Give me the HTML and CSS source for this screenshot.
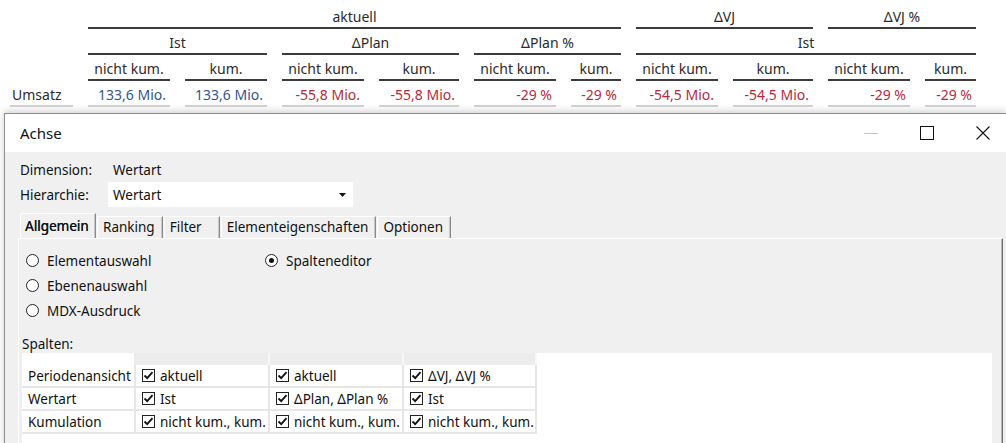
FILE: index.html
```html
<!DOCTYPE html>
<html lang="de">
<head>
<meta charset="utf-8">
<title>Achse</title>
<link rel="stylesheet" href="styles.css">
</head>
<body>
<div class="pivot">
  <div class="corner"></div>
  <div class="h span6">aktuell</div>
  <div class="h span2">ΔVJ</div>
  <div class="h span2">ΔVJ %</div>

  <div class="corner"></div>
  <div class="h span2">Ist</div>
  <div class="h span2">ΔPlan</div>
  <div class="h span2">ΔPlan %</div>
  <div class="h span4">Ist</div>

  <div class="corner"></div>
  <div class="h">nicht kum.</div><div class="h">kum.</div>
  <div class="h">nicht kum.</div><div class="h">kum.</div>
  <div class="h">nicht kum.</div><div class="h">kum.</div>
  <div class="h">nicht kum.</div><div class="h">kum.</div>
  <div class="h">nicht kum.</div><div class="h">kum.</div>

  <div class="rowlabel">Umsatz</div>
  <div class="v pos">133,6 Mio.</div>
  <div class="v pos">133,6 Mio.</div>
  <div class="v neg">-55,8 Mio.</div>
  <div class="v neg">-55,8 Mio.</div>
  <div class="v neg">-29 %</div>
  <div class="v neg">-29 %</div>
  <div class="v neg">-54,5 Mio.</div>
  <div class="v neg">-54,5 Mio.</div>
  <div class="v neg">-29 %</div>
  <div class="v neg">-29 %</div>
</div>

<div class="dialog">
  <div class="titlebar">
    <span class="title">Achse</span>
    <div class="winbtns">
      <span class="winbtn"><svg width="14" height="14" viewBox="0 0 14 14"><line x1="0" y1="7.5" x2="14" y2="7.5" stroke="#c4c4c4" stroke-width="1"/></svg></span>
      <span class="winbtn"><svg width="14" height="14" viewBox="0 0 14 14"><rect x="0.5" y="0.5" width="13" height="13" fill="none" stroke="#111" stroke-width="1"/></svg></span>
      <span class="winbtn"><svg width="14" height="14" viewBox="0 0 14 14"><path d="M0.5 0.5 L13.5 13.5 M13.5 0.5 L0.5 13.5" stroke="#111" stroke-width="1.1" fill="none"/></svg></span>
    </div>
  </div>

  <div class="body">
    <div class="fields">
      <span class="flabel">Dimension:</span>
      <span class="fvalue">Wertart</span>
      <span class="flabel">Hierarchie:</span>
      <div class="combo">
        <span>Wertart</span>
        <svg class="arrow" width="7" height="4" viewBox="0 0 7 4"><path d="M0 0 H7 L3.5 4 Z" fill="#111"/></svg>
      </div>
    </div>

    <div class="tabs">
      <span class="tab active">Allgemein</span>
      <span class="tab">Ranking</span>
      <span class="tab wide">Filter</span>
      <span class="tab">Elementeigenschaften</span>
      <span class="tab">Optionen</span>
    </div>

    <div class="panel">
      <div class="radios">
        <label class="radio"><span class="circle"></span>Elementauswahl</label>
        <label class="radio"><span class="circle checked"></span>Spalteneditor</label>
        <label class="radio"><span class="circle"></span>Ebenenauswahl</label>
        <span></span>
        <label class="radio"><span class="circle"></span>MDX-Ausdruck</label>
        <span></span>
      </div>

      <div class="spalten">Spalten:</div>

      <div class="gridbox">
        <div class="cgrid">
          <div class="gh white"></div>
          <div class="gh"></div>
          <div class="gh"></div>
          <div class="gh"></div>

          <div class="gc">Periodenansicht</div>
          <div class="gc"><span class="cb"><svg width="11" height="11" viewBox="0 0 11 11"><path d="M1.5 5.5 L4.2 8.2 L9.5 2.2" stroke="#111" stroke-width="1.8" fill="none"/></svg></span>aktuell</div>
          <div class="gc"><span class="cb"><svg width="11" height="11" viewBox="0 0 11 11"><path d="M1.5 5.5 L4.2 8.2 L9.5 2.2" stroke="#111" stroke-width="1.8" fill="none"/></svg></span>aktuell</div>
          <div class="gc"><span class="cb"><svg width="11" height="11" viewBox="0 0 11 11"><path d="M1.5 5.5 L4.2 8.2 L9.5 2.2" stroke="#111" stroke-width="1.8" fill="none"/></svg></span>ΔVJ, ΔVJ %</div>

          <div class="gc">Wertart</div>
          <div class="gc"><span class="cb"><svg width="11" height="11" viewBox="0 0 11 11"><path d="M1.5 5.5 L4.2 8.2 L9.5 2.2" stroke="#111" stroke-width="1.8" fill="none"/></svg></span>Ist</div>
          <div class="gc"><span class="cb"><svg width="11" height="11" viewBox="0 0 11 11"><path d="M1.5 5.5 L4.2 8.2 L9.5 2.2" stroke="#111" stroke-width="1.8" fill="none"/></svg></span>ΔPlan, ΔPlan %</div>
          <div class="gc"><span class="cb"><svg width="11" height="11" viewBox="0 0 11 11"><path d="M1.5 5.5 L4.2 8.2 L9.5 2.2" stroke="#111" stroke-width="1.8" fill="none"/></svg></span>Ist</div>

          <div class="gc">Kumulation</div>
          <div class="gc"><span class="cb"><svg width="11" height="11" viewBox="0 0 11 11"><path d="M1.5 5.5 L4.2 8.2 L9.5 2.2" stroke="#111" stroke-width="1.8" fill="none"/></svg></span>nicht kum., kum.</div>
          <div class="gc"><span class="cb"><svg width="11" height="11" viewBox="0 0 11 11"><path d="M1.5 5.5 L4.2 8.2 L9.5 2.2" stroke="#111" stroke-width="1.8" fill="none"/></svg></span>nicht kum., kum.</div>
          <div class="gc"><span class="cb"><svg width="11" height="11" viewBox="0 0 11 11"><path d="M1.5 5.5 L4.2 8.2 L9.5 2.2" stroke="#111" stroke-width="1.8" fill="none"/></svg></span>nicht kum., kum.</div>
        </div>
      </div>
    </div>
  </div>
</div>
</body>
</html>
```

FILE: styles.css
```css
* { box-sizing: border-box; }

html, body {
  margin: 0;
  padding: 0;
  background: #fff;
  width: 1006px;
  height: 443px;
  overflow: hidden;
  font-family: "Noto Sans", "Open Sans", sans-serif;
}

/* ---------- pivot table ---------- */
.pivot {
  display: grid;
  grid-template-columns: 63px 82px 82px 82px 80px 82px 50px 82px 80px 82px 51px;
  column-gap: 15px;
  padding: 3px 0 0 10px;
  font-size: 14px;
  color: #2b2b2b;
}

.h, .v, .rowlabel, .corner {
  height: 26px;
  padding-top: 4px;
  line-height: 20px;
  white-space: nowrap;
}

.h {
  text-align: center;
  border-bottom: 2px solid #3c3c3c;
}

.span2 { grid-column: span 2; }
.span4 { grid-column: span 4; }
.span6 { grid-column: span 6; }

.rowlabel {
  padding-left: 2px;
  border-bottom: 2px solid #cfcfcf;
}

.v {
  text-align: right;
  padding-right: 4px;
  border-bottom: 2px solid #cfcfcf;
}

.pos { color: #34558b; }
.neg { color: #b52a3c; }

/* ---------- dialog ---------- */
.dialog {
  margin: 6px 0 0 4px;
  width: 1002px;
  height: 340px;
  border: 1px solid #8f8f8f;
  border-right: none;
  background: #f0f0f0;
  box-shadow: 0 -2px 7px rgba(0, 0, 0, 0.18);
  font-size: 13.5px;
  color: #111;
}

.titlebar {
  height: 38px;
  background: #fff;
  display: flex;
  align-items: center;
  justify-content: space-between;
  padding-left: 15px;
}

.title {
  font-size: 15px;
  color: #111;
}

.winbtns {
  display: flex;
  height: 100%;
  margin-right: -5px;
}

.winbtn {
  width: 56px;
  display: flex;
  align-items: center;
  justify-content: center;
}

.body {
  padding-top: 8px;
}

.fields {
  display: grid;
  grid-template-columns: 88px auto;
  grid-template-rows: 20px 25px;
  row-gap: 2px;
  align-items: center;
  padding-left: 15px;
  line-height: 20px;
}

.fvalue {
  padding-left: 5px;
}

.combo {
  width: 245px;
  height: 25px;
  background: #fff;
  display: flex;
  align-items: center;
  justify-content: space-between;
  padding: 0 7px 0 5px;
}

.arrow { display: block; }

/* tabs */
.tabs {
  display: flex;
  align-items: flex-end;
  height: 25px;
  margin-top: 6px;
  padding-left: 15px;
}

.tab {
  height: 22px;
  line-height: 21px;
  padding: 0 7px 0 5px;
  border-top: 1px solid #fff;
  border-left: 1px solid #fff;
  border-right: 1px solid #8a8a8a;
  box-shadow: inset -1px 0 0 #c8c8c8;
  margin-right: 1px;
  white-space: nowrap;
}

.tab.active {
  height: 25px;
  line-height: 25px;
  width: 76px;
  padding: 0 6px 0 4px;
  text-shadow: 0.35px 0 0 #111;
}

.tab.wide {
  width: 56px;
}

/* panel */
.panel {
  margin: 0 3px 0 13px;
  height: 220px;
  border-top: 1px solid #fff;
  border-left: 1px solid #fff;
  border-right: 1px solid #6e6e6e;
  box-shadow: inset -1px 0 0 #b4b4b4;
  padding: 9px 10px 0 3px;
}

.radios {
  display: grid;
  grid-template-columns: 239px auto;
  grid-auto-rows: 25px;
  margin-left: 4px;
}

.radio {
  display: flex;
  align-items: center;
  gap: 8px;
  white-space: nowrap;
}

.circle {
  width: 13px;
  height: 13px;
  border: 1px solid #222;
  border-radius: 50%;
  background: #fff;
  display: flex;
  align-items: center;
  justify-content: center;
}

.circle.checked::after {
  content: "";
  width: 5px;
  height: 5px;
  border-radius: 50%;
  background: #111;
}

.spalten {
  margin-top: 12px;
  line-height: 18px;
}

.gridbox {
  background: #fff;
  height: 100px;
}

.cgrid {
  display: grid;
  grid-template-columns: 114px 134px 134px 133px;
  grid-template-rows: 12px repeat(3, 23px);
  width: 515px;
}

.gh {
  background: #ececec;
  border-right: 2px solid #f7f7f7;
}

.gh.white {
  background: #fff;
  border-right: 2px solid #ececec;
}

.gc {
  display: flex;
  align-items: center;
  gap: 5px;
  padding-left: 6px;
  border-right: 2px solid #e6e6e6;
  border-bottom: 2px solid #e6e6e6;
  white-space: nowrap;
}

.cb {
  width: 13px;
  height: 13px;
  border: 1px solid #222;
  background: #fff;
  display: flex;
  align-items: center;
  justify-content: center;
  flex: none;
}

.cb svg { display: block; }
```
